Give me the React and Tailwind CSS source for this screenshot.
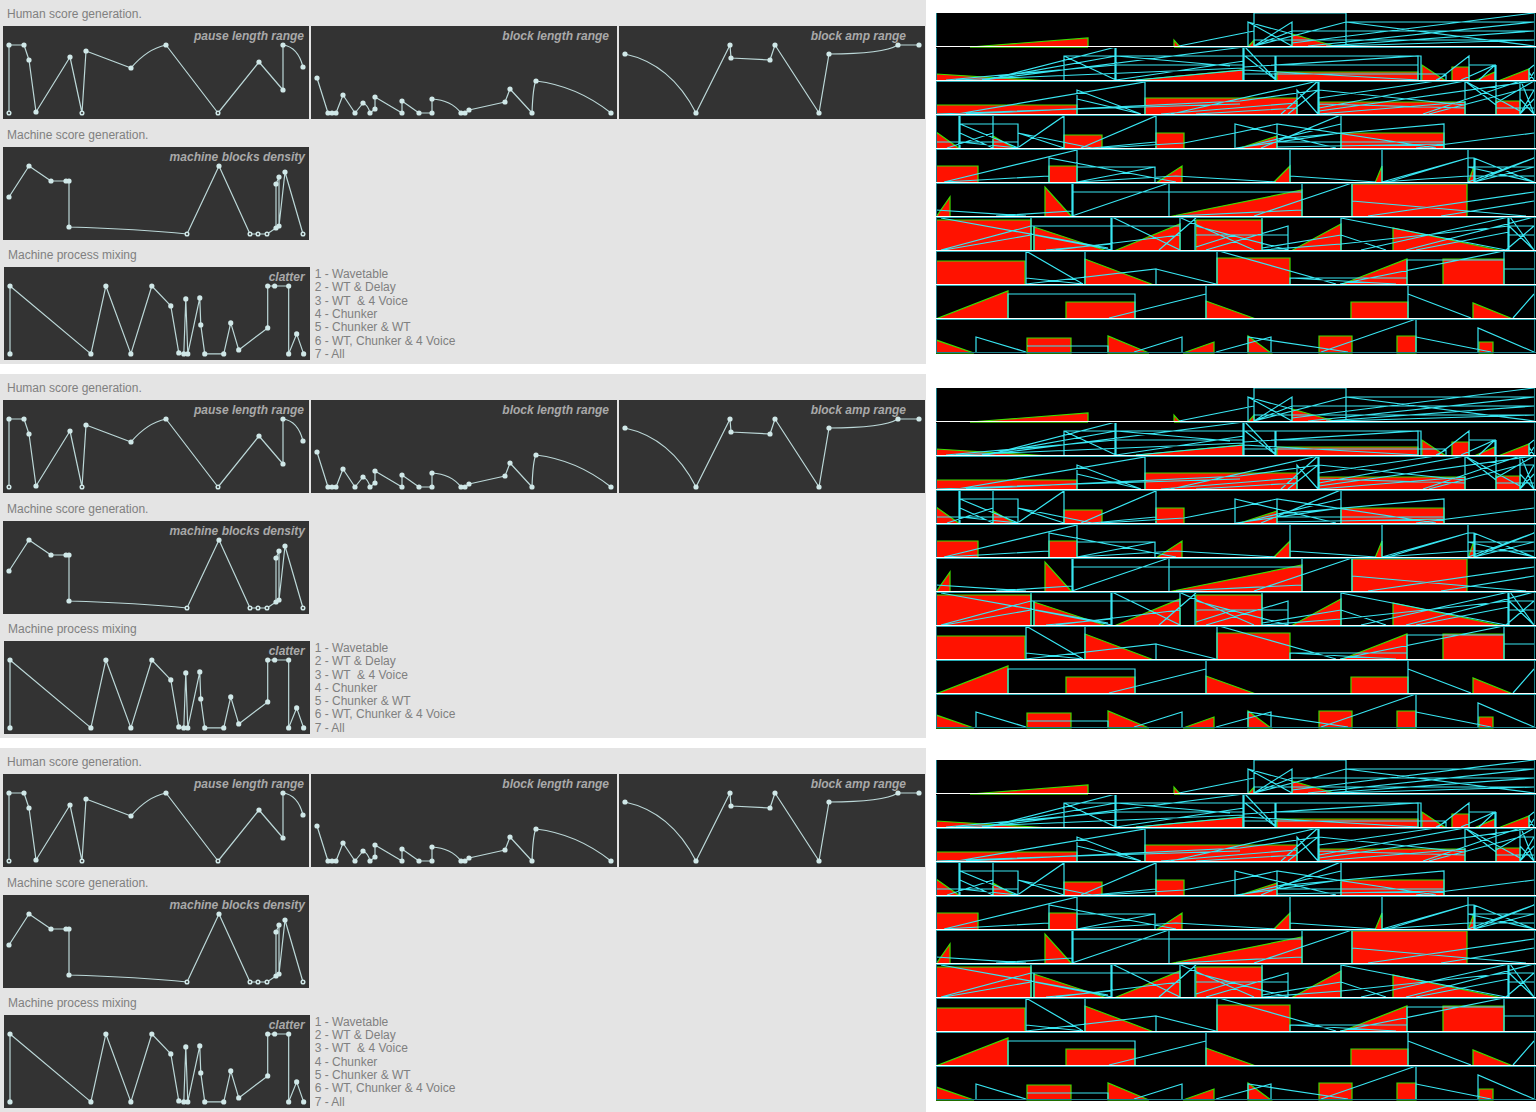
import React from "react";

// Each point is [x, y, options]; "h" marks a hollow point, q is the control point of an incoming curve.
const PAUSE = [
  [6, 87, { h: 1 }], [6, 19], [21, 19], [26, 34], [33, 86], [67, 31], [79, 87, { h: 1 }], [83, 25],
  [128, 42], [163, 19, { q: [144, 23] }], [215, 87, { h: 1 }], [256, 36], [280, 64], [280, 19],
  [300, 41, { q: [295, 21] }],
];
const LENGTH = [
  [6, 52], [17, 87], [21, 87], [25, 87], [32, 69], [44, 87], [52, 77], [59, 87, { q: [57, 79] }],
  [64, 83], [64, 71], [91, 87], [91, 75], [108, 87], [121, 87], [121, 73], [150, 87, { q: [140, 74] }],
  [154, 87], [158, 84], [194, 76], [199, 63], [221, 87], [225, 55, { q: [222, 60] }],
  [300, 87, { q: [266, 60] }],
];
const AMP = [
  [6, 28], [77, 87, { q: [52, 38] }], [111, 19], [112, 32], [151, 34], [156, 19], [200, 87], [210, 28],
  [279, 19, { q: [264, 28] }], [300, 19],
];
const DENSITY = [
  [6, 50], [26, 19], [48, 34], [63, 34], [66, 34], [66, 80], [184, 87, { h: 1, q: [136, 82] }],
  [216, 19], [247, 87, { h: 1 }], [255, 87, { h: 1 }], [264, 87, { h: 1 }], [273, 81], [273, 37],
  [276, 30], [276, 79], [282, 25], [300, 87, { h: 1 }],
];
const CLATTER = [
  [6, 87], [6, 19], [87, 87], [102, 19], [127, 87], [148, 19], [167, 39], [175, 86], [180, 87],
  [182, 32], [184, 87], [196, 31], [197, 58], [201, 87], [220, 87], [227, 56], [235, 83], [264, 61],
  [264, 19], [271, 19], [285, 19], [285, 87], [293, 67], [300, 87],
];

function Envelope({ title, points, inset }) {
  const d = points
    .map(([x, y, o], i) => (i === 0 ? `M${x} ${y}` : o && o.q ? `Q${o.q[0]} ${o.q[1]} ${x} ${y}` : `L${x} ${y}`))
    .join("");
  return (
    <div className="relative bg-[#333333]">
      <svg viewBox="0 0 306 93" className="block h-auto w-full" aria-hidden="true">
        <path d={d} fill="none" stroke="#bcd8d8" strokeWidth="1.2" strokeLinejoin="round" />
        {points.map(([x, y, o], i) =>
          o && o.h ? (
            <circle key={i} cx={x} cy={y} r="1.8" fill="#333333" stroke="#d0e8e8" strokeWidth="1.5" />
          ) : (
            <circle key={i} cx={x} cy={y} r="2.6" fill="#d0e8e8" />
          )
        )}
      </svg>
      <span className={`absolute top-[2px] text-xs leading-4 font-bold italic text-[#a9a9a9] ${inset}`}>{title}</span>
    </div>
  );
}

// Score rows, 34 units tall. red: filled blocks, lines: connecting traces.
const ROWS = [
  {
    red: "M34 34L152 25V34ZM238 34V27L244 34ZM312 34L318 27V34ZM356 34V21L402 34Z",
    lines:
      "M243 33L318 18M312 33V9L356 33M312 9L356 21M318 33V0H410V33M356 33V9L318 33L356 18H598M318 33L410 9H598M318 27H356M356 27H598M410 9L598 33M356 30L598 0M372 33L598 9M390 33L598 18M400 33L598 27",
  },
  {
    red: "M0 34V27L114 34ZM191 34L307 23V34ZM341 34V25H482V34ZM486 34V18L510 34ZM516 34V20H533V34ZM538 34L559 25V34ZM562 34L593 22V34Z",
    lines:
      "M51 33L180 0V33M46 33L180 9M10 33L180 18M20 33L308 21M48 33L308 0M128 33V9H308M128 9L180 33M179 0V33M180 18H308M180 9L294 19M180 33L308 14M200 33L308 23M308 0V33M307 0V33M309 0L340 33M309 9L340 33M339 33V9M340 33V9H308M340 9H485V33M482 33V9L308 20M340 18H482M308 27H510V33M308 23L482 33M500 33L510 28M502 33L533 9V33M525 33L559 18V33M533 18H559M543 33L559 18M560 18V33M593 25L598 33M593 33L598 25M593 33V22L598 18",
  },
  {
    red: "M0 34V24H141V34ZM209 34V17H361V34ZM383 34V21H529V34ZM560 34V20H584V34Z",
    lines:
      "M21 33L209 1V33M30 33L304 20L383 9M0 33L141 28L304 23M141 33V9L205 33M141 18L205 33M235 33L382 0M225 33L361 22M260 33L361 27M361 33V9L382 33M352 33L382 9M345 33L382 0M382 0V33M383 0V33M383 9L529 24M383 27L529 0V33M383 17L500 0M383 30L598 0M383 33L529 21M383 23L529 27M487 33L584 0M493 33L584 9M529 0L560 24M529 0L584 30M560 0V33M560 27H584M560 22L598 0M584 0V33M585 0L598 33M584 9H598M584 18L598 33M584 33L598 9M584 33L598 18M584 27H598",
  },
  {
    red: "M0 34V17L24 34ZM57 34V21L80 34ZM128 34V20H166V34ZM220 34V18H248V34ZM301 34L341 21V34ZM405 34V18H508V34Z",
    lines:
      "M24 0V33M23 0V33M57 0V33M24 9H82V33M24 9L82 33M24 18L57 33M11 33L57 18M0 27H82M24 27L82 33M82 18L128 33M82 18L156 33M83 32L128 1V33M145 33L220 1V33M156 33L220 27M165 33L248 28L299 18L341 9M299 33V9L400 33M341 33V9L500 33M300 33L405 18M304 33L405 9M325 33L405 0V33M341 24L508 9V33M341 27H508M341 32L508 29M480 33L598 18",
  },
  {
    red: "M0 34V17H42V34ZM113 34V17H141V34ZM220 34L246 17V34ZM337 34L354 17V34ZM439 34L446 17V34ZM532 34L538 17V34Z",
    lines:
      "M8 33L141 1V33M8 33L113 27M113 33V9L240 33M141 18H219V33M141 33L219 18M141 33L240 27L340 33M354 0V33M354 27L440 33M446 0V33L532 9M452 33L532 9M446 33L532 27M532 0V33M538 9V33M539 9V33M532 18H598M532 27H598M538 9L598 33M532 18L598 33M538 33L598 9M538 33L598 18M532 33L598 9M532 9H538",
  },
  {
    red: "M0 34L14 14V34ZM109 34V4L136 34ZM232 34L366 7V34ZM416 34V1H531V34Z",
    lines:
      "M136 0V33M137 0V33M136 33L233 0V33M137 9H366V33M0 27L90 33M60 33L136 28M240 33L366 27M366 0V33M318 33L416 0V33M416 18L590 33M432 33L598 9M505 33L598 18",
  },
  {
    red: "M0 34V3H95V34ZM98 34V10L171 34ZM178 34L244 7V34ZM260 34V3H326V34ZM355 34L405 7V34ZM457 34V11L567 34Z",
    lines:
      "M5 1L172 31M5 33L95 9M8 33L95 18M95 0V33M98 33V9M95 9H244M98 18L176 33M110 33L176 27M120 33L244 18M175 0V33M176 0V33M176 0L244 33M223 33L260 1M244 0V33M245 1L318 33M259 0V33M260 9L352 33M270 33L352 9V33M260 18H352M260 30L298 18M326 0V33M326 31L405 18L450 33M326 33L405 27M405 0V33M405 1L570 33M405 27L573 9M425 33L573 0M470 33L598 0M480 33L573 15M573 0V33M572 0V33M574 0L598 33M573 9H598M573 18H598M573 9L598 33M570 33L598 9",
  },
  {
    red: "M0 34V10H89V34ZM149 34V8L218 34ZM281 34V7H354V34ZM404 34L471 8V34ZM507 34V8H568V34Z",
    lines:
      "M90 0V33M90 0L147 33M90 27L147 33M90 33L220 18V33M149 0V33M220 18L280 33M281 0V33M283 0L400 33M354 33V27H471M354 27L460 33M404 33L568 0V33M471 33V9H568M568 18H598",
  },
  {
    red: "M0 34L72 6V34ZM130 34V17H199V34ZM270 34V16L320 34ZM415 34V17H472V34ZM537 34V18L577 34Z",
    lines: "M72 33V9H199V33M173 33L270 9M270 0V33M472 0V33M472 9L535 33M577 33L598 9",
  },
  {
    red: "M0 34V21L38 34ZM91 34V19H135V34ZM172 34V17L213 34ZM247 34L278 23V34ZM312 34V17L335 34ZM383 34V17H416V34ZM461 34V17H480V34ZM543 34V23H557V34Z",
    lines:
      "M40 33V18L90 33M91 27H172V33M198 33L246 18V33M280 33L335 18V33M312 33V18L412 33M385 33L480 0V33M480 18L555 33M542 33V9L598 33",
  },
];

function Score({ offset }) {
  return (
    <svg
      viewBox="0 0 600 341"
      className={`block h-auto w-full self-start ${offset}`}
      role="img"
      aria-label="Generated score"
    >
      <rect width="600" height="341" fill="#000000" />
      {ROWS.map((row, i) => (
        <g key={i} transform={`translate(0 ${i * 34})`}>
          <path d={row.red} fill="#ff1200" stroke="#3ddc00" strokeWidth="1.2" />
          <path d={row.lines} fill="none" stroke="#38e6f2" strokeWidth="1.2" />
          <path d="M0.5 0V34M598.5 0V34" fill="none" stroke="#1b7f88" strokeWidth="1" />
        </g>
      ))}
      {ROWS.map((row, i) =>
        i < 9 ? (
          <g key={i}>
            <path d={`M0 ${i * 34 + 34.5}H600`} stroke="#26aab4" strokeWidth="1" />
            <path d={`M0 ${i * 34 + 33.5}H600`} stroke="#ffffff" strokeWidth="1" />
          </g>
        ) : (
          <path key={i} d="M0 339.5H600" stroke="#1b7f88" strokeWidth="1" />
        )
      )}
      <path d="M0 34.5H312" stroke="#000000" strokeWidth="1" />
      <path d="M34 34.5H152M238 34.5H244" stroke="#2b9a00" strokeWidth="1" />
      <path d="M244 34.5H312" stroke="#1b7f88" strokeWidth="1" />
    </svg>
  );
}

const LEGEND = [
  "1 - Wavetable",
  "2 - WT & Delay",
  "3 - WT  & 4 Voice",
  "4 - Chunker",
  "5 - Chunker & WT",
  "6 - WT, Chunker & 4 Voice",
  "7 - All",
];

function Study({ offset }) {
  return (
    <section className="grid grid-cols-[926fr_600fr] gap-[10px]">
      <div className="bg-[#e4e4e4] pr-px pb-1 pl-[3px]">
        <h2 className="mt-[2px] pl-1 leading-6">Human score generation.</h2>
        <div className="grid grid-cols-3 gap-[2px]">
          <Envelope title="pause length range" points={PAUSE} inset="right-[5px]" />
          <Envelope title="block length range" points={LENGTH} inset="right-[8px]" />
          <Envelope title="block amp range" points={AMP} inset="right-[19px]" />
        </div>
        <h2 className="mt-1 pl-1 leading-6">Machine score generation.</h2>
        <div className="grid grid-cols-3 gap-[2px]">
          <Envelope title="machine blocks density" points={DENSITY} inset="right-[4px]" />
        </div>
        <h2 className="mt-[3px] pl-[5px] leading-6">Machine process mixing</h2>
        <div className="grid grid-cols-3 gap-[2px] pl-px">
          <Envelope title="clatter" points={CLATTER} inset="right-[5px]" />
          <ul className="mt-px -mb-px flex flex-col justify-between pl-[3px] leading-[13px] whitespace-pre">
            {LEGEND.map((item) => (
              <li key={item}>{item}</li>
            ))}
          </ul>
        </div>
      </div>
      <Score offset={offset} />
    </section>
  );
}

export default function App() {
  return (
    <main className="flex flex-col gap-[10px] bg-white font-['Liberation_Sans',Arial,sans-serif] text-xs text-[#808080]">
      <Study offset="mt-[13px]" />
      <Study offset="mt-[14px]" />
      <Study offset="mt-[12px]" />
    </main>
  );
}
